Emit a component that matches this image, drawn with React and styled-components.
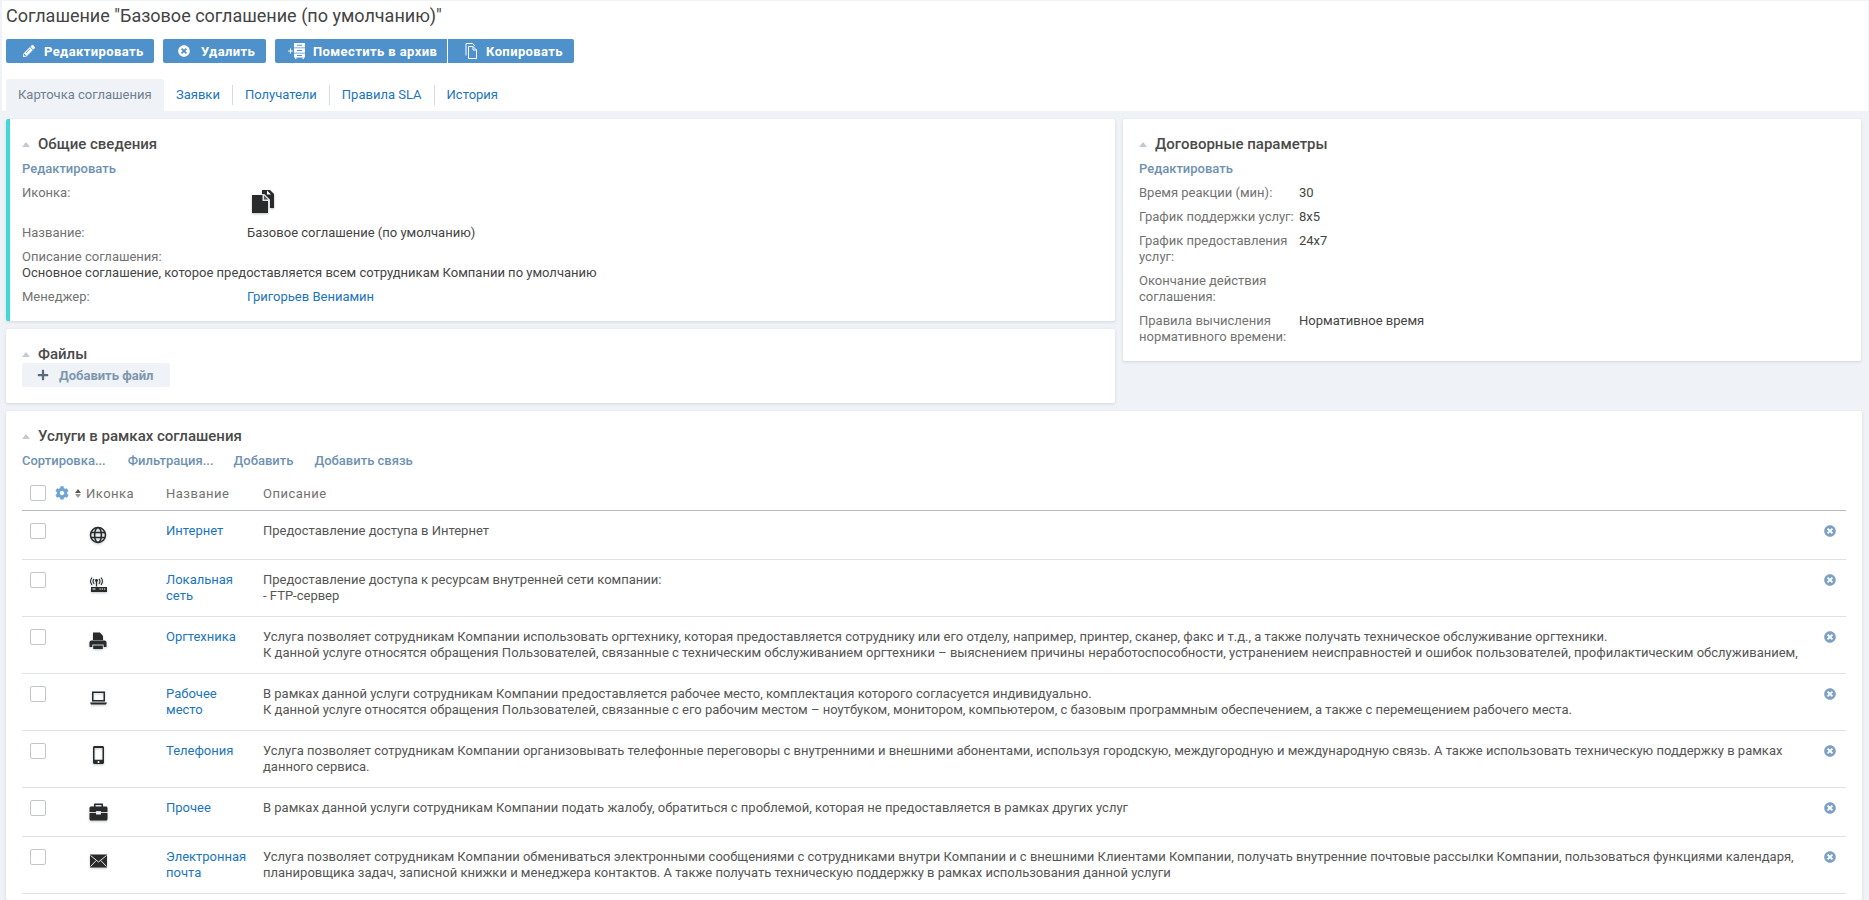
import React from "react";
import styled, { createGlobalStyle } from "styled-components";
import { FaPencilAlt, FaTimesCircle, FaPlus, FaCog } from "react-icons/fa";

const Global = createGlobalStyle`
  html, body { margin: 0; padding: 0; background: #eff2f6; height: 900px; overflow: hidden; }
  body { font-family: Roboto, "Liberation Sans", sans-serif; font-size: 13px; color: #333; }
  * { box-sizing: border-box; }
`;

const Page = styled.div`
  padding: 1px 1px 0 2px;
  height: 900px;
  display: flex;
  flex-direction: column;
`;
const Header = styled.header`
  background: #fff;
  height: 110px;
  padding: 0 4px;
  flex: none;
`;
const Title = styled.h1`
  margin: 0;
  height: 38px;
  font-size: 18px;
  line-height: 30px;
  font-weight: 400;
  color: #444;
`;
const Toolbar = styled.div`
  display: flex;
  height: 24px;
`;
const ToolGroup = styled.div`
  display: flex;
  gap: 1px;
  margin-right: 9px;
`;
const ToolButton = styled.button`
  display: flex;
  align-items: center;
  height: 24px;
  width: ${(p) => p.$w}px;
  padding: 0 0 0 ${(p) => p.$pad}px;
  gap: ${(p) => p.$gap}px;
  border: 0;
  border-radius: ${(p) => p.$radius || "2px"};
  background: #4f91ca;
  color: #fff;
  font: 700 13px Roboto, sans-serif;
  letter-spacing: 0.4px;
  white-space: nowrap;
  svg { flex: none; }
`;
const Tabs = styled.nav`
  display: flex;
  align-items: center;
  height: 32px;
  margin-top: 16px;
`;
const ActiveTab = styled.div`
  width: 158px;
  height: 32px;
  line-height: 32px;
  padding: 0 12px;
  background: #eff2f6;
  border-radius: 3px 3px 0 0;
  color: #6f8091;
  white-space: nowrap;
`;
const Tab = styled.a`
  display: block;
  height: 20px;
  line-height: 20px;
  padding: 0 12px;
  color: #1c75bc;
  border-right: ${(p) => (p.$last ? "0" : "1px solid #d5dbe1")};
`;
const Main = styled.main`
  flex: 1;
  min-height: 0;
  padding: 8px 6px 0 4px;
  display: flex;
  flex-direction: column;
  gap: 8px;
`;
const TopGrid = styled.div`
  display: grid;
  grid-template-columns: 1109px 738px;
  gap: 8px;
`;
const Column = styled.div`
  display: flex;
  flex-direction: column;
  gap: 8px;
`;
const Card = styled.section`
  background: #fff;
  box-shadow: 0 1px 3px rgba(120, 135, 150, 0.25);
  border-radius: 2px;
  padding: 17px 16px ${(p) => p.$bottom ?? 16}px;
  ${(p) => p.$accent && "border-left: 4px solid #42d8d8; padding-left: 12px;"}
`;
const CardTitle = styled.h2`
  display: flex;
  align-items: center;
  gap: 8px;
  margin: 0;
  height: 16px;
  font-size: 15px;
  line-height: 16px;
  font-weight: 500;
  color: #4a4a4a;
`;
const Caret = styled.span`
  width: 0;
  height: 0;
  border-left: 4px solid transparent;
  border-right: 4px solid transparent;
  border-bottom: 5px solid #c3cad2;
`;
const ActionRow = styled.div`
  display: flex;
  height: 16px;
  margin-top: 9px;
`;
const Action = styled.a`
  display: block;
  line-height: 16px;
  font-weight: 500;
  color: #6f91b1;
  margin-right: ${(p) => p.$mr || 0}px;
`;
const Fields = styled.div`
  display: grid;
  grid-template-columns: ${(p) => p.$label}px 1fr;
  row-gap: 8px;
  margin-top: 8px;
  line-height: 16px;
`;
const Label = styled.div`
  color: #727272;
  ${(p) => p.$wide && "grid-column: 1 / -1; margin-bottom: -8px;"}
`;
const Value = styled.div`
  color: #444;
  min-height: 16px;
  ${(p) => p.$wide && "grid-column: 1 / -1;"}
`;
const Link = styled.a`
  color: #1c75bc;
`;
const BigIcon = styled.div`
  height: 32px;
  padding: 5px 0 0 5px;
`;
const AddFile = styled.button`
  display: flex;
  align-items: center;
  gap: 10px;
  width: 148px;
  height: 24px;
  margin-top: 1px;
  padding: 0 0 0 15px;
  border: 0;
  border-radius: 2px;
  background: #eff2f6;
  color: #7d97ae;
  font: 700 13px Roboto, sans-serif;
`;
const ServicesCard = styled(Card)`
  flex: 1;
`;
const Row = styled.div`
  display: grid;
  grid-template-columns: 64px 80px 97px 1fr 32px;
  padding: 12px 0;
  border-bottom: 1px solid #dde2e8;
  line-height: 16px;
`;
const HeadRow = styled(Row)`
  margin-top: 16px;
  height: 26px;
  padding: 0 0 8px;
  border-bottom-color: #b5bbc1;
  color: #727272;
  letter-spacing: 0.5px;
`;
const HeadCell = styled.div`
  padding-top: 1px;
`;
const CheckCell = styled.div`
  display: flex;
  align-items: flex-start;
  gap: 9px;
  padding-left: 8px;
`;
const Check = styled.span`
  display: block;
  flex: none;
  width: 16px;
  height: 16px;
  border: 1px solid #c2c6ca;
  border-radius: 2px;
  background: #fff;
`;
const HeadTools = styled.div`
  display: flex;
  align-items: center;
  gap: 6px;
  height: 16px;
`;
const Sort = styled.span`
  display: flex;
  flex-direction: column;
  gap: 1px;
  &::before, &::after {
    content: "";
    width: 0;
    height: 0;
    border-left: 3px solid transparent;
    border-right: 3px solid transparent;
  }
  &::before { border-bottom: 4px solid #555; }
  &::after { border-top: 4px solid #999; }
`;
const IconCell = styled.div`
  width: 24px;
  height: 24px;
  filter: drop-shadow(0 1px 1px rgba(110, 130, 150, 0.45));
`;
const NameCell = styled.div`
  padding-right: 10px;
  color: #1c75bc;
`;
const Desc = styled.div`
  color: #555;
`;
const Line = styled.div`
  white-space: nowrap;
`;
const CloseCell = styled.div`
  display: flex;
  padding: 2px 0 0 10px;
  color: #7ea1c2;
`;

const Svg = ({ children }) => (
  <svg width="24" height="24" viewBox="0 0 24 24" fill="#2a2a2a">{children}</svg>
);

const Globe = () => (
  <Svg>
    <g fill="none" stroke="#2a2a2a" strokeWidth="1.5">
      <circle cx="12" cy="12" r="7.5" />
      <ellipse cx="12" cy="12" rx="3.4" ry="7.5" />
      <path d="M5 9.5h14M5 14.5h14" />
    </g>
  </Svg>
);
const Router = () => (
  <Svg>
    <g fill="none" stroke="#2a2a2a" strokeWidth="1.1">
      <path d="M6 5.500a6 6 0 0 0 0 7.500M8.100 6.800a3.500 3.500 0 0 0 0 5M15 5.500a6 6 0 0 1 0 7.500M12.900 6.800a3.500 3.500 0 0 1 0 5" />
    </g>
    <circle cx="10.500" cy="8.500" r="1.400" />
    <path d="M9.900 9h1.200v5.500H9.900z" />
    <path d="M5 15h16v5H5z" />
    <path fill="#fff" d="M6.500 16.500h3v1h-3zM13.500 16.500h1.300v1h-1.300zM15.700 16.500H17v1h-1.300zM17.900 16.500h1.300v1h-1.300z" />
  </Svg>
);
const Printer = () => (
  <Svg>
    <path d="M7 3.500h7l3 3.500v4H7z" />
    <path d="M5.500 11.500h13c1.200 0 2 .9 2 2V18h-2.800v-2.500H6.300V18H3.500v-4.500c0-1.100.8-2 2-2z" />
    <path d="M7.200 16.500h9.600V20H7.200z" />
  </Svg>
);
const Laptop = () => (
  <Svg>
    <path fillRule="evenodd" d="M6 5.500h13v10H6zM7.500 7v7h10V7z" />
    <path d="M4 16.500h17L20 18.500H5z" />
  </Svg>
);
const Phone = () => (
  <Svg>
    <path fillRule="evenodd" d="M8.500 3h8c.8 0 1.500.7 1.500 1.500v15c0 .8-.7 1.500-1.500 1.500h-8c-.8 0-1.500-.7-1.500-1.500v-15C7 3.700 7.700 3 8.500 3zM8.500 5v11.800h8V5z" />
    <circle cx="12.500" cy="18.900" r="1" fill="#fff" />
  </Svg>
);
const Briefcase = () => (
  <Svg>
    <path fillRule="evenodd" d="M9 3.500h7c.6 0 1 .4 1 1V7h-1.500V5h-6v2H8V4.500c0-.6.4-1 1-1z" />
    <path d="M5 6.500h15c.8 0 1.500.7 1.500 1.500v4h-6.500v-1h-5v1H3.500V8c0-.8.7-1.500 1.500-1.500z" />
    <path d="M3.500 13H10v1.500h5V13h6.500v6c0 .8-.7 1.500-1.500 1.500H5c-.8 0-1.500-.7-1.500-1.500z" />
  </Svg>
);
const Mail = () => (
  <Svg>
    <path d="M4 5.500h17v13H4z" />
    <path fill="none" stroke="#e4e7ea" strokeWidth="1" d="M4.500 6.500l8 6.500 8-6.500M4.500 17.500l5.700-6M20.500 17.500l-5.700-6" />
  </Svg>
);
const Docs = () => (
  <svg width="23" height="24" viewBox="0 0 23 24" fill="#2a2a2a" style={{ filter: "drop-shadow(0 1px 1px rgba(110,130,150,.5))" }}>
    <path d="M10 0h8l4 4v14h-4V9.500L12.500 4H10z" />
    <path d="M15 .5v4h4z" fill="#fff" />
    <path d="M0 5h10.500v6H16v12H0z" />
    <path d="M12 5.500l4 4h-4z" fill="#555" />
  </svg>
);
const ArchiveIcon = () => (
  <svg width="17" height="16" viewBox="0 0 17 16" fill="#fff">
    <path d="M0 7.500h2v-2h1v2h2v1H3v2H2v-2H0z" />
    <path fillRule="evenodd" d="M6 0h11v4.500H6zM9 1.700v1h5v-1z" />
    <path fillRule="evenodd" d="M6 5.200h11v4.500H6zM9 6.900v1h5v-1z" />
    <path fillRule="evenodd" d="M6 10.400h11v4H6zM9 12v1h5v-1z" />
    <path d="M7 14.400h1.500V16H7zM14.500 14.400H16V16h-1.500z" />
  </svg>
);
const CopyIcon = () => (
  <svg width="13" height="16" viewBox="0 0 13 16" fill="none" stroke="#fff" strokeWidth="1">
    <path d="M1 12.500V.5h6.500L10 3" />
    <path d="M3.500 3.500H8l3.500 3.500v8.500h-8z" />
    <path d="M8 3.500V7h3.500" />
  </svg>
);

const services = [
  { name: "Интернет", icon: <Globe />, lines: ["Предоставление доступа в Интернет"] },
  { name: "Локальная сеть", icon: <Router />, lines: ["Предоставление доступа к ресурсам внутренней сети компании:", "- FTP-сервер"] },
  {
    name: "Оргтехника",
    icon: <Printer />,
    lines: [
      "Услуга позволяет сотрудникам Компании использовать оргтехнику, которая предоставляется сотруднику или его отделу, например, принтер, сканер, факс и т.д., а также получать техническое обслуживание оргтехники.",
      "К данной услуге относятся обращения Пользователей, связанные с техническим обслуживанием оргтехники – выяснением причины неработоспособности, устранением неисправностей и ошибок пользователей, профилактическим обслуживанием,",
    ],
  },
  {
    name: "Рабочее место",
    icon: <Laptop />,
    lines: [
      "В рамках данной услуги сотрудникам Компании предоставляется рабочее место, комплектация которого согласуется индивидуально.",
      "К данной услуге относятся обращения Пользователей, связанные с его рабочим местом – ноутбуком, монитором, компьютером, с базовым программным обеспечением, а также с перемещением рабочего места.",
    ],
  },
  {
    name: "Телефония",
    icon: <Phone />,
    lines: [
      "Услуга позволяет сотрудникам Компании организовывать телефонные переговоры с внутренними и внешними абонентами, используя городскую, междугородную и международную связь. А также использовать техническую поддержку в рамках",
      "данного сервиса.",
    ],
  },
  { name: "Прочее", icon: <Briefcase />, lines: ["В рамках данной услуги сотрудникам Компании подать жалобу, обратиться с проблемой, которая не предоставляется в рамках других услуг"] },
  {
    name: "Электронная почта",
    icon: <Mail />,
    lines: [
      "Услуга позволяет сотрудникам Компании обмениваться электронными сообщениями с сотрудниками внутри Компании и с внешними Клиентами Компании, получать внутренние почтовые рассылки Компании, пользоваться функциями календаря,",
      "планировщика задач, записной книжки и менеджера контактов. А также получать техническую поддержку в рамках использования данной услуги",
    ],
  },
];

export default function App() {
  return (
    <Page>
      <Global />
      <Header>
        <Title>Соглашение "Базовое соглашение (по умолчанию)"</Title>
        <Toolbar>
          <ToolGroup>
            <ToolButton $w={148} $pad={17} $gap={9}><FaPencilAlt size={12} />Редактировать</ToolButton>
          </ToolGroup>
          <ToolGroup>
            <ToolButton $w={103} $pad={15} $gap={11}><FaTimesCircle size={12} />Удалить</ToolButton>
          </ToolGroup>
          <ToolGroup>
            <ToolButton $w={172} $pad={13} $gap={8} $radius="2px 0 0 2px"><ArchiveIcon />Поместить в архив</ToolButton>
            <ToolButton $w={126} $pad={17} $gap={8} $radius="0 2px 2px 0"><CopyIcon />Копировать</ToolButton>
          </ToolGroup>
        </Toolbar>
        <Tabs>
          <ActiveTab>Карточка соглашения</ActiveTab>
          <Tab>Заявки</Tab>
          <Tab>Получатели</Tab>
          <Tab>Правила SLA</Tab>
          <Tab $last>История</Tab>
        </Tabs>
      </Header>
      <Main>
        <TopGrid>
          <Column>
            <Card $accent>
              <CardTitle><Caret />Общие сведения</CardTitle>
              <ActionRow><Action>Редактировать</Action></ActionRow>
              <Fields $label={225}>
                <Label>Иконка:</Label>
                <BigIcon><Docs /></BigIcon>
                <Label>Название:</Label>
                <Value>Базовое соглашение (по умолчанию)</Value>
                <Label $wide>Описание соглашения:</Label>
                <Value $wide>Основное соглашение, которое предоставляется всем сотрудникам Компании по умолчанию</Value>
                <Label>Менеджер:</Label>
                <Value><Link>Григорьев Вениамин</Link></Value>
              </Fields>
            </Card>
            <Card $bottom={16}>
              <CardTitle><Caret />Файлы</CardTitle>
              <AddFile><FaPlus size={12} color="#566a7e" />Добавить файл</AddFile>
            </Card>
          </Column>
          <Column>
            <Card>
              <CardTitle><Caret />Договорные параметры</CardTitle>
              <ActionRow><Action>Редактировать</Action></ActionRow>
              <Fields $label={160}>
                <Label>Время реакции (мин):</Label>
                <Value>30</Value>
                <Label>График поддержки услуг:</Label>
                <Value>8x5</Value>
                <Label>График предоставления услуг:</Label>
                <Value>24x7</Value>
                <Label>Окончание действия соглашения:</Label>
                <Value />
                <Label>Правила вычисления нормативного времени:</Label>
                <Value>Нормативное время</Value>
              </Fields>
            </Card>
          </Column>
        </TopGrid>
        <ServicesCard $bottom={5}>
          <CardTitle><Caret />Услуги в рамках соглашения</CardTitle>
          <ActionRow>
            <Action $mr={22}>Сортировка...</Action>
            <Action $mr={20}>Фильтрация...</Action>
            <Action $mr={21}>Добавить</Action>
            <Action>Добавить связь</Action>
          </ActionRow>
          <HeadRow>
            <CheckCell>
              <Check />
              <HeadTools>
                <FaCog size={14} color="#6fa5d3" />
                <Sort />
              </HeadTools>
            </CheckCell>
            <HeadCell>Иконка</HeadCell>
            <HeadCell>Название</HeadCell>
            <HeadCell>Описание</HeadCell>
            <div />
          </HeadRow>
          {services.map((s) => (
            <Row key={s.name}>
              <CheckCell><Check /></CheckCell>
              <IconCell>{s.icon}</IconCell>
              <NameCell>{s.name}</NameCell>
              <Desc>{s.lines.map((l) => <Line key={l}>{l}</Line>)}</Desc>
              <CloseCell><FaTimesCircle size={12} /></CloseCell>
            </Row>
          ))}
        </ServicesCard>
      </Main>
    </Page>
  );
}
